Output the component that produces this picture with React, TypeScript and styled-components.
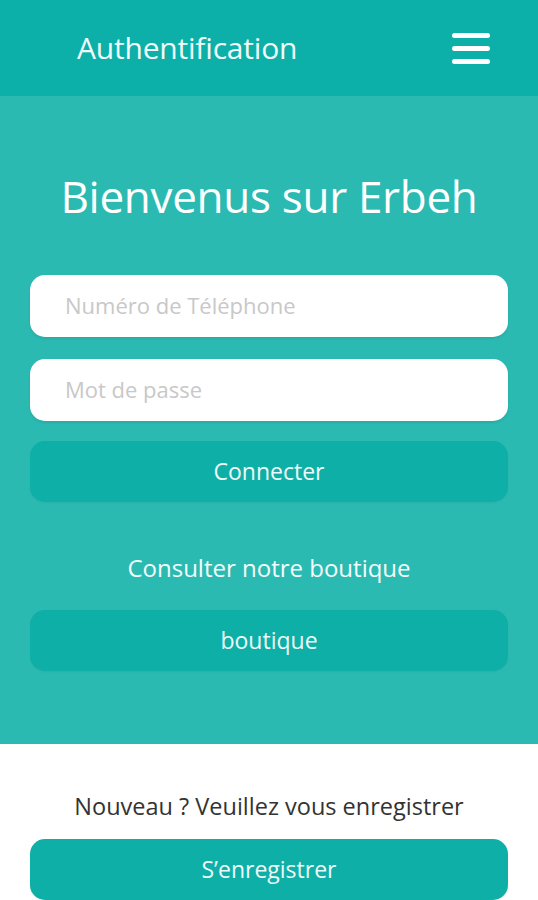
import React from 'react';
import styled, { createGlobalStyle } from 'styled-components';

const GlobalStyle = createGlobalStyle`
  html, body {
    margin: 0;
    padding: 0;
    background: #ffffff;
    font-family: "Open Sans", "Noto Sans", sans-serif;
  }
`;

const Page = styled.div`
  width: 538px;
  height: 900px;
  overflow: hidden;
  display: flex;
  flex-direction: column;
`;

const Header = styled.header`
  height: 96px;
  flex: none;
  background: #0cb0a8;
  display: flex;
  align-items: center;
  justify-content: space-between;
  padding: 0 48px 0 77px;
  box-sizing: border-box;
  box-shadow: 0 2px 2px rgba(0, 0, 0, 0.06);
`;

const HeaderTitle = styled.h1`
  margin: 0;
  font-size: 30px;
  font-weight: 400;
  color: #f2fbfa;
  letter-spacing: -0.2px;
  padding-bottom: 2px;
`;

const MenuButton = styled.div`
  width: 38px;
  display: flex;
  flex-direction: column;
  gap: 8px;
`;

const MenuBar = styled.span`
  display: block;
  height: 5px;
  border-radius: 3px;
  background: #ffffff;
`;

const Main = styled.main`
  height: 648px;
  flex: none;
  background: #2bbab2;
  display: flex;
  flex-direction: column;
  padding: 0 30px;
  box-sizing: border-box;
`;

const Welcome = styled.h2`
  margin: 70px 0 49px;
  text-align: center;
  font-size: 44px;
  font-weight: 400;
  color: #ffffff;
  letter-spacing: -0.3px;
  line-height: 60px;
`;

const Field = styled.input`
  height: 62px;
  border: none;
  border-radius: 15px;
  background: #ffffff;
  padding: 0 35px 2px;
  font-family: inherit;
  font-size: 22px;
  color: #333;
  box-shadow: 0 2px 3px rgba(0, 0, 0, 0.08);
  outline: none;
  margin-bottom: 22px;
  box-sizing: border-box;

  &::placeholder {
    color: #c8c8c8;
  }
`;

const Button = styled.button<{ $mt?: number }>`
  height: 61px;
  border: none;
  border-radius: 15px;
  background: #0eafa7;
  color: #eefaf9;
  font-family: inherit;
  font-size: 23px;
  margin-top: ${p => p.$mt ?? 0}px;
  box-shadow: 0 1px 2px rgba(0, 0, 0, 0.05);
  padding: 0 0 2px;
`;

const Caption = styled.p`
  margin: 51px 0 27px;
  text-align: center;
  font-size: 24px;
  color: #f4fbfb;
  line-height: 30px;
`;

const Footer = styled.footer`
  flex: 1;
  background: #ffffff;
  display: flex;
  flex-direction: column;
  padding: 0 30px;
  box-sizing: border-box;
`;

const FooterText = styled.p`
  margin: 47px 0 18px;
  text-align: center;
  font-size: 23.5px;
  color: #333333;
  line-height: 30px;
`;

export default function App() {
  return (
    <>
      <GlobalStyle />
      <Page>
        <Header>
          <HeaderTitle>Authentification</HeaderTitle>
          <MenuButton>
            <MenuBar />
            <MenuBar />
            <MenuBar />
          </MenuButton>
        </Header>
        <Main>
          <Welcome>Bienvenus sur Erbeh</Welcome>
          <Field placeholder="Numéro de Téléphone" />
          <Field type="password" placeholder="Mot de passe" />
          <Button $mt={-2}>Connecter</Button>
          <Caption>Consulter notre boutique</Caption>
          <Button>boutique</Button>
        </Main>
        <Footer>
          <FooterText>Nouveau ? Veuillez vous enregistrer</FooterText>
          <Button>S’enregistrer</Button>
        </Footer>
      </Page>
    </>
  );
}
